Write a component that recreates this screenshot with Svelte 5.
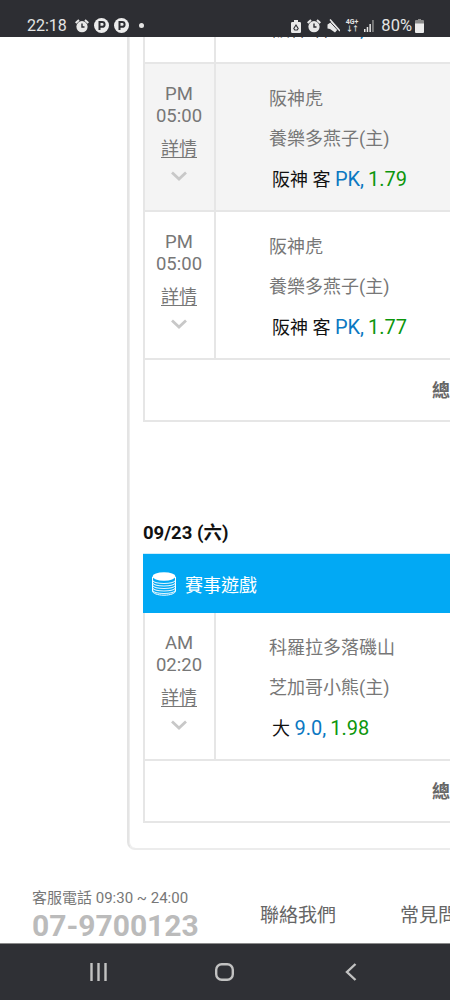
<script lang="ts">
  const day1 = [
    { time: '05:00', active: false, home: '阪神虎', away: '養樂多燕子(主)', pick: '阪神 客', bet: 'PK,', odds: '1.80' },
    { time: '05:00', active: true, home: '阪神虎', away: '養樂多燕子(主)', pick: '阪神 客', bet: 'PK,', odds: '1.79' },
    { time: '05:00', active: false, home: '阪神虎', away: '養樂多燕子(主)', pick: '阪神 客', bet: 'PK,', odds: '1.77' }
  ]
  const day2 = [
    { ampm: 'AM', time: '02:20', active: false, home: '科羅拉多落磯山', away: '芝加哥小熊(主)', pick: '大', bet: '9.0,', odds: '1.98' }
  ]
</script>

{#snippet row(m)}
  <div class="row" class:active={m.active}>
    <div class="time-cell">
      <div class="time">{m.ampm ?? 'PM'}<br />{m.time}</div>
      <span class="detail">詳情</span>
      <svg class="chevron" width="16" height="10" viewBox="0 0 16 10">
        <path d="M1 1.500l7 6.500 7-6.500" fill="none" stroke="#c8c8c8" stroke-width="2.800" />
      </svg>
    </div>
    <div class="info-cell">
      <div class="team">{m.home}</div>
      <div class="team">{m.away}</div>
      <div class="pick">{m.pick} <span class="bet">{m.bet}</span><span class="odds">{m.odds}</span></div>
    </div>
  </div>
{/snippet}

{#snippet alarm()}
  <svg width="14" height="14" viewBox="0 0 14 14">
    <circle cx="7" cy="7.700" r="5.600" fill="#e8e8e8" />
    <path d="M.7 4L4 1M13.300 4L10 1" stroke="#e8e8e8" stroke-width="2" />
    <path d="M7 4.500v3.500h2.500" stroke="#2d2e33" stroke-width="1.400" fill="none" />
  </svg>
{/snippet}

{#snippet parking()}
  <svg width="15" height="15" viewBox="0 0 15 15">
    <circle cx="7.500" cy="7.500" r="7.500" fill="#ececec" />
    <path d="M5.500 12V4h2.700a2.400 2.400 0 0 1 0 4.800H5.500" fill="none" stroke="#2d2e33" stroke-width="2" />
  </svg>
{/snippet}

<div class="screen">
  <div class="status-bar">
    <div class="status-left">
      <span class="clock">22:18</span>
      {@render alarm()}
      {@render parking()}
      {@render parking()}
      <span class="dot"></span>
    </div>
    <div class="status-right">
      <svg width="10" height="14" viewBox="0 0 10 14">
        <path d="M3 3V1h4v2h1.800A1.200 1.200 0 0 1 10 4.200V12.800A1.200 1.200 0 0 1 8.800 14H1.200A1.200 1.200 0 0 1 0 12.800V4.200A1.200 1.200 0 0 1 1.200 3z" fill="#e8e8e8" />
        <path d="M5 6l2.200 3.500-1 1.500H3.800l-1-1.500z" fill="none" stroke="#2d2e33" stroke-width="1.100" />
      </svg>
      {@render alarm()}
      <svg width="13" height="14" viewBox="0 0 13 14">
        <path d="M.5 5.500L5 2.500l6 7.500-3 3.500-5-3.500-2.500-.5z" fill="#e8e8e8" />
        <path d="M1.500 1l11 12" stroke="#2d2e33" stroke-width="1" />
        <path d="M3 .5l10 11.500" stroke="#e8e8e8" stroke-width="1.500" />
      </svg>
      <span class="net">4G+<span class="arrows">↓↑</span></span>
      <svg class="signal" width="10" height="13" viewBox="0 0 10 13">
        <path d="M0 10h1.500v3H0zM2.700 8h1.500v5H2.700zM5.400 5h1.500v8H5.400z" fill="#e8e8e8" />
        <path d="M8.200 1h1.500v12H8.200z" fill="#8e8e8e" />
      </svg>
      <span class="percent">80%</span>
      <svg width="9" height="14" viewBox="0 0 9 14">
        <path d="M3 0h3v1h2a1 1 0 0 1 1 1v3H0V2a1 1 0 0 1 1-1h2z" fill="#8b8b8b" />
        <path d="M0 4.500h9V13a1 1 0 0 1-1 1H1a1 1 0 0 1-1-1z" fill="#ececec" />
      </svg>
    </div>
  </div>

  <div class="scroll">
    <div class="card">
      <div class="table first">
        {#each day1 as m}
          {@render row(m)}
        {/each}
        <div class="total">總</div>
      </div>

      <h3 class="date">09/23 (六)</h3>
      <div class="table">
        <div class="game-head">
          <svg width="24" height="24" viewBox="0 0 24 24">
            <ellipse cx="12" cy="4.500" rx="11.500" ry="4.200" fill="#fff" />
            <path d="M.5 5v14c0 2.300 5 4.200 11.500 4.200S23.500 21.300 23.500 19V5" fill="none" stroke="#fff" stroke-width="1" />
            <path d="M.5 8.500c1.500 2 5.500 3 11.500 3s10-1 11.500-3M.5 11c1.500 2 5.500 3 11.500 3s10-1 11.500-3M.5 13.500c1.500 2 5.500 3 11.500 3s10-1 11.500-3M.5 16c1.500 2 5.500 3 11.500 3s10-1 11.500-3M.5 18.500c1.500 2 5.500 3 11.500 3s10-1 11.500-3" fill="none" stroke="#e6f6fe" stroke-width="1.100" />
          </svg>
          <span>賽事遊戲</span>
        </div>
        {#each day2 as m}
          {@render row(m)}
        {/each}
        <div class="total">總</div>
      </div>
    </div>
  </div>

  <footer class="footer">
    <div class="service">
      <div class="service-label">客服電話 09:30 ~ 24:00</div>
      <div class="phone">07-9700123</div>
    </div>
    <span class="link first-link">聯絡我們</span>
    <span class="link">常見問題</span>
  </footer>

  <div class="nav-bar">
    <svg width="17" height="18" viewBox="0 0 17 18">
      <path d="M1.500 0v18M8.500 0v18M15.500 0v18" stroke="#c2c2c2" stroke-width="2.400" />
    </svg>
    <svg width="19" height="18" viewBox="0 0 19 18">
      <rect x="1.200" y="1.200" width="16.600" height="15.600" rx="5.500" fill="none" stroke="#c2c2c2" stroke-width="2.400" />
    </svg>
    <svg class="back" width="12" height="18" viewBox="0 0 12 18">
      <path d="M10.500 1L2 9l8.500 8" fill="none" stroke="#c2c2c2" stroke-width="2.400" />
    </svg>
  </div>
</div>

<style>
  :global(body) {
    margin: 0;
    background: #fff;
  }

  .screen {
    width: 450px;
    height: 1000px;
    display: flex;
    flex-direction: column;
    overflow: hidden;
    font-family: Roboto, "Noto Sans CJK TC", sans-serif;
    color: #777;
  }

  .status-bar {
    flex: none;
    height: 37px;
    box-sizing: border-box;
    padding: 14px 26px 0 27px;
    background: #2d2e33;
    display: flex;
    justify-content: space-between;
    align-items: center;
    color: #e4e4e4;
  }

  .status-left,
  .status-right {
    display: flex;
    align-items: center;
  }

  .status-left {
    gap: 5px;
  }

  .status-right {
    gap: 6px;
  }

  .clock {
    font-size: 16px;
    margin-right: 3px;
  }

  .dot {
    width: 5px;
    height: 5px;
    margin-left: 5px;
    border-radius: 50%;
    background: #e4e4e4;
  }

  .net {
    display: flex;
    flex-direction: column;
    align-items: center;
    font-size: 7px;
    line-height: 7px;
    font-weight: 700;
  }

  .arrows {
    letter-spacing: -1px;
  }

  .percent {
    font-size: 16.500px;
    margin: 0 -3px 0 1px;
  }

  .scroll {
    flex: 1;
    min-height: 0;
    overflow: hidden;
  }

  .card {
    width: 640px;
    box-sizing: border-box;
    margin: -121px 0 0 127px;
    padding: 0 0 25px 14px;
    background: #fff;
    border-left: 2px solid #e4e4e4;
    border-bottom: 2px solid #ececec;
    border-bottom-left-radius: 8px;
    box-shadow: inset 1px 0 0 #eee;
  }

  .table {
    border: solid #e6e6e6;
    border-width: 0 0 2px 2px;
  }

  .row {
    height: 148px;
    box-sizing: border-box;
    display: flex;
    border-bottom: 2px solid #e6e6e6;
    background: #fff;
  }

  .row.active {
    background: #f4f4f4;
  }

  .first .row:first-child .info-cell {
    margin-top: -2px;
  }

  .time-cell {
    flex: none;
    width: 71px;
    box-sizing: border-box;
    border-right: 2px solid #e6e6e6;
    padding: 19px 1px 0 0;
    text-align: center;
  }

  .time {
    font-size: 18.500px;
    line-height: 22px;
  }

  .detail {
    display: block;
    margin-top: 11px;
    font-size: 18px;
    line-height: 22px;
    text-decoration: underline;
    text-underline-offset: 2px;
  }

  .chevron {
    display: block;
    margin: 11px auto 0;
  }

  .info-cell {
    padding: 23px 0 0 53px;
  }

  .team {
    height: 40px;
    font-size: 18px;
    line-height: 24px;
  }

  .pick {
    margin-left: 3px;
    font-size: 18px;
    line-height: 24px;
    color: #111;
  }

  .bet {
    font-size: 20px;
    color: #0b78c2;
  }

  .odds {
    margin-left: 4px;
    font-size: 20px;
    color: #0c960c;
  }

  .total {
    height: 60px;
    box-sizing: border-box;
    padding: 1px 0 0 287px;
    font-size: 18px;
    font-weight: 700;
    line-height: 60px;
    color: #666;
  }

  .date {
    margin: 100px 0 9px;
    font-size: 18.500px;
    font-weight: 700;
    line-height: 22px;
    color: #111;
  }

  .game-head {
    height: 60px;
    box-sizing: border-box;
    margin-left: -2px;
    padding-left: 9px;
    display: flex;
    align-items: center;
    gap: 9px;
    background: #02a9f4;
    border-top: 1px solid #cfeefc;
    color: #fff;
    font-size: 18px;
  }

  .footer {
    flex: none;
    height: 56px;
    box-sizing: border-box;
    padding-left: 32px;
    display: flex;
    align-items: center;
    white-space: nowrap;
    background: #fff;
  }

  .service {
    flex: none;
    width: 229px;
  }

  .service-label {
    margin-top: 1px;
    font-size: 15px;
    line-height: 18px;
  }

  .phone {
    margin-top: 3px;
    font-size: 30px;
    font-weight: 700;
    line-height: 32px;
    color: #bbb;
  }

  .link {
    flex: none;
    margin: 0 0 3px -1px;
    font-size: 19px;
    color: #666;
  }

  .first-link {
    margin-right: 65px;
  }

  .nav-bar {
    flex: none;
    height: 57px;
    box-sizing: border-box;
    padding-left: 90px;
    display: flex;
    align-items: center;
    gap: 108px;
    background: #2f3035;
    border-top: 1px solid #8a8a8a;
  }

  .back {
    margin-left: 3px;
  }
</style>
